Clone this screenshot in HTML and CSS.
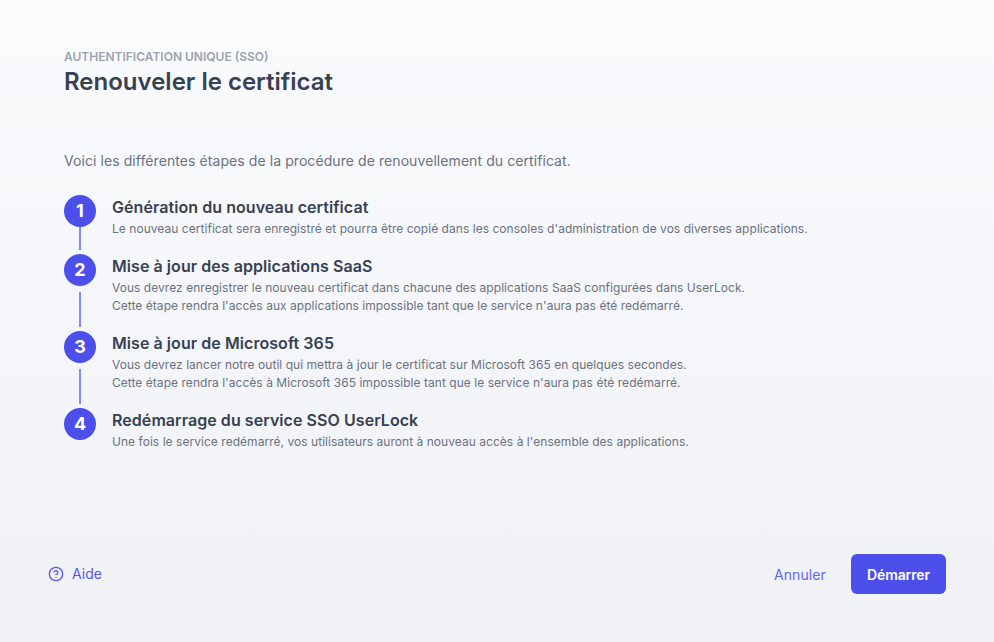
FILE: index.html
```html
<!DOCTYPE html>
<html lang="fr">
<head>
  <meta charset="UTF-8">
  <title>Renouveler le certificat</title>
  <link rel="stylesheet" href="styles.css">
</head>
<body>
  <div class="page">
    <header class="header">
      <p class="eyebrow">AUTHENTIFICATION UNIQUE (SSO)</p>
      <h1>Renouveler le certificat</h1>
    </header>

    <p class="intro">Voici les différentes étapes de la procédure de renouvellement du certificat.</p>

    <ol class="steps">
      <li class="step step-short">
        <div class="marker">
          <span class="num">1</span>
          <span class="line line-first"></span>
        </div>
        <div class="body">
          <h2>Génération du nouveau certificat</h2>
          <p>Le nouveau certificat sera enregistré et pourra être copié dans les consoles d'administration de vos diverses applications.</p>
        </div>
      </li>
      <li class="step step-tall">
        <div class="marker">
          <span class="num">2</span>
          <span class="line"></span>
        </div>
        <div class="body">
          <h2>Mise à jour des applications SaaS</h2>
          <p>Vous devrez enregistrer le nouveau certificat dans chacune des applications SaaS configurées dans UserLock.</p>
          <p>Cette étape rendra l'accès aux applications impossible tant que le service n'aura pas été redémarré.</p>
        </div>
      </li>
      <li class="step step-tall">
        <div class="marker">
          <span class="num">3</span>
          <span class="line"></span>
        </div>
        <div class="body">
          <h2>Mise à jour de Microsoft 365</h2>
          <p>Vous devrez lancer notre outil qui mettra à jour le certificat sur Microsoft 365 en quelques secondes.</p>
          <p>Cette étape rendra l'accès à Microsoft 365 impossible tant que le service n'aura pas été redémarré.</p>
        </div>
      </li>
      <li class="step">
        <div class="marker">
          <span class="num">4</span>
        </div>
        <div class="body">
          <h2>Redémarrage du service SSO UserLock</h2>
          <p>Une fois le service redémarré, vos utilisateurs auront à nouveau accès à l'ensemble des applications.</p>
        </div>
      </li>
    </ol>

    <footer class="footer">
      <a class="help" href="#">
        <svg class="help-icon" viewBox="0 0 24 24" fill="none" stroke="currentColor" stroke-width="2" stroke-linecap="round" stroke-linejoin="round">
          <circle cx="12" cy="12" r="10"></circle>
          <path d="M9.1 9a3 3 0 0 1 5.8 1c0 2-3 3-3 3"></path>
          <path d="M12 17h.01"></path>
        </svg>
        Aide
      </a>
      <div class="actions">
        <a class="cancel" href="#">Annuler</a>
        <button class="start" type="button">Démarrer</button>
      </div>
    </footer>
  </div>
</body>
</html>
```

FILE: styles.css
```css
html,
body {
  height: 100%;
}

body {
  margin: 0;
  font-family: Inter, "Liberation Sans", sans-serif;
  background: linear-gradient(180deg, #fafbfd 0%, #eff1f5 100%);
  color: #374151;
}

.page {
  height: 642px;
  box-sizing: border-box;
  padding: 50px 48px 48px 64px;
  display: flex;
  flex-direction: column;
}

/* Header */
.eyebrow {
  margin: 0;
  font-size: 12px;
  line-height: 14px;
  font-weight: 600;
  color: #9ca3af;
}

h1 {
  margin: 2px 0 0;
  font-size: 24px;
  line-height: 32px;
  font-weight: 600;
  color: #374151;
}

.intro {
  margin: 53px 0 0;
  font-size: 14px;
  line-height: 20px;
  letter-spacing: 0.076px;
  color: #6b7280;
}

/* Steps */
.steps {
  list-style: none;
  margin: 24px 0 0;
  padding: 0;
}

.step {
  display: flex;
  gap: 16px;
}

.step-short {
  height: 59px;
}

.step-tall {
  height: 77px;
}

.marker {
  width: 32px;
  display: flex;
  flex-direction: column;
  align-items: center;
}

.num {
  flex: none;
  width: 32px;
  height: 32px;
  border-radius: 50%;
  background: #4c4fe9;
  color: #fff;
  font-size: 18px;
  font-weight: 700;
  line-height: 32px;
  text-align: center;
}

.line {
  width: 2px;
  height: 35px;
  margin-top: 6px;
  background: #818cf8;
}

.line-first {
  height: 23px;
  margin-top: 0;
}

.body h2 {
  margin: 2px 0 2px;
  font-size: 16px;
  line-height: 21px;
  font-weight: 600;
  letter-spacing: 0.06px;
  color: #374151;
}

.body p {
  margin: 0;
  font-size: 12px;
  line-height: 18px;
  letter-spacing: 0.04px;
  color: #6b7280;
}

/* Footer */
.footer {
  margin-top: auto;
  margin-left: -16px;
  display: flex;
  justify-content: space-between;
  align-items: center;
}

.help {
  display: flex;
  align-items: center;
  gap: 8px;
  font-size: 14px;
  line-height: 18px;
  color: #5558ee;
  text-decoration: none;
}

.help-icon {
  width: 16px;
  height: 16px;
}

.actions {
  display: flex;
  align-items: center;
  gap: 25px;
}

.cancel {
  font-size: 14px;
  letter-spacing: 0.1px;
  color: #6366f1;
  text-decoration: none;
}

.start {
  width: 95px;
  height: 40px;
  border: none;
  border-radius: 6px;
  background: #4c4fe9;
  color: #fff;
  font-family: inherit;
  font-size: 14px;
  font-weight: 600;
  letter-spacing: -0.1px;
  cursor: pointer;
}
```
